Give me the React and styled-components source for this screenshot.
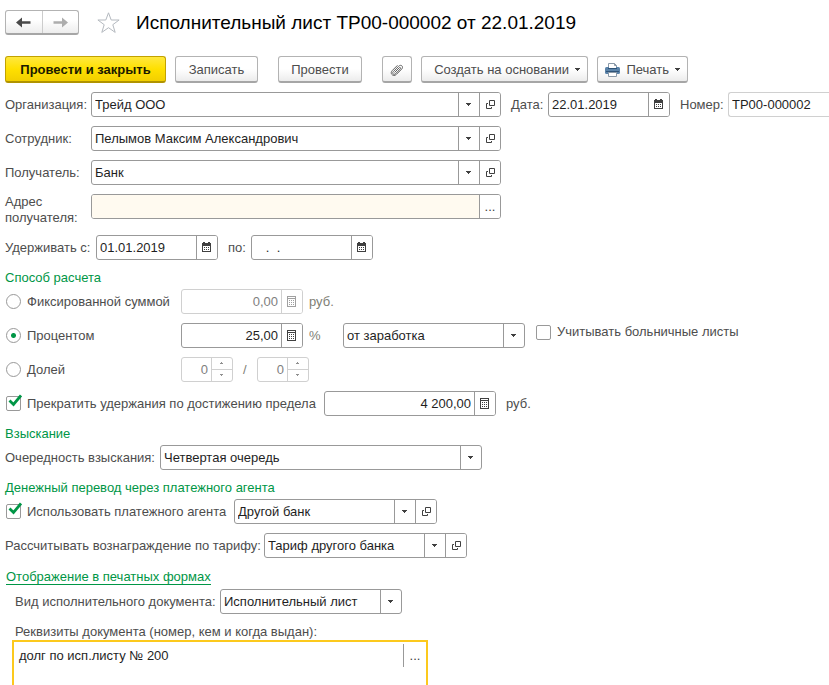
import React, { useId } from 'react'
import styled, { createGlobalStyle } from 'styled-components'

const GlobalStyle = createGlobalStyle`
  * {
    box-sizing: border-box;
  }
  body {
    margin: 0;
    background: #fff;
  }
  body, button, input, select, textarea {
    font-family: "Liberation Sans", Arial, sans-serif;
    font-size: 13px;
    line-height: 16px;
    color: #4d4d4d;
  }
`

const Page = styled.main`
  height: 100vh;
  padding: 10px 0 0 5px;
  overflow: hidden;
`

const Header = styled.header`
  display: flex;
  align-items: center;
  height: 25px;
`

const NavGroup = styled.div`
  display: flex;
  width: 74px;
  height: 25px;
  border: 1px solid #b3b3b3;
  border-bottom: 2px solid #a6a6a6;
  border-radius: 3px;
  background: linear-gradient(#fff 40%, #ededed);
`

const NavButton = styled.button`
  flex: 1;
  display: flex;
  align-items: center;
  justify-content: center;
  padding: 0;
  border: 0;
  background: none;
  color: #4a4a4a;

  & + & {
    border-left: 1px solid #ccc;
    color: #adadad;
  }
`

const StarButton = styled.button`
  display: flex;
  margin: 0 15px 0 17px;
  padding: 0;
  border: 0;
  background: none;
`

const Title = styled.h1`
  margin: 0;
  padding-top: 1px;
  font-size: 19px;
  line-height: 24px;
  font-weight: normal;
  color: #000;
  white-space: nowrap;
`

const Toolbar = styled.div`
  display: flex;
  gap: 20px;
  margin: 21px 0 9px;
`

const ToolGroup = styled.div`
  display: flex;
  gap: 9px;
`

const ToolButton = styled.button`
  display: flex;
  align-items: center;
  justify-content: ${({ $menu }) => ($menu ? 'flex-end' : 'center')};
  gap: 6px;
  width: ${({ $width }) => $width}px;
  height: 27px;
  padding: 1px ${({ $menu }) => ($menu ? 6 : 0)}px 0 0;
  white-space: nowrap;
  border: 1px solid ${({ $primary }) => ($primary ? '#c2a200' : '#b3b3b3')};
  border-bottom: 2px solid ${({ $primary }) => ($primary ? '#b09300' : '#a6a6a6')};
  border-radius: 3px;
  background: ${({ $primary }) =>
    $primary ? 'linear-gradient(#ffe83f, #ffe000 50%, #f2cf00)' : 'linear-gradient(#fff 50%, #ececec)'};
  color: ${({ $primary }) => ($primary ? '#1a1a00' : '#4d4d4d')};
  font-weight: ${({ $primary }) => ($primary ? 'bold' : 'normal')};
`

const Form = styled.form`
  display: flex;
  flex-direction: column;
  gap: 9px;
`

const Row = styled.div`
  display: flex;
  align-items: ${({ $top }) => ($top ? 'flex-start' : 'center')};
  min-height: 25px;
  padding-left: ${({ $indent }) => ($indent ? 10 : 0)}px;
`

const Label = styled.label`
  flex: none;
  width: ${({ $width }) => ($width ? `${$width}px` : 'auto')};
  white-space: ${({ $wrap }) => ($wrap ? 'normal' : 'nowrap')};
`

const Section = styled.section`
  display: flex;
  flex-direction: column;
  gap: 9px;
`

const SectionTitle = styled.h2`
  margin: 0 0 -6px;
  padding-top: 1px;
  font-size: 13px;
  line-height: 16px;
  font-weight: normal;
  color: #009646;
`

const SectionLink = styled.a`
  display: inline-block;
  margin: 1px;
  border-bottom: 1px solid #009646;
  color: #009646;
  line-height: 15px;
  text-decoration: none;
`

const Box = styled.div`
  display: flex;
  flex: 0 1 ${({ $width }) => $width}px;
  min-width: 0;
  height: 25px;
  border: 1px solid ${({ $muted }) => ($muted ? '#d0d0d0' : '#999')};
  border-radius: 3px;
  background: #fff;
  overflow: hidden;
`

const NumberBox = styled(Box)`
  flex: 1 0 90px;
  border-right: 0;
  border-radius: 3px 0 0 3px;
`

const TextInput = styled.input`
  flex: 1;
  min-width: 0;
  padding: 0 3px;
  border: 0;
  outline: 0;
  background: ${({ $tinted }) => ($tinted ? '#fffaf0' : 'transparent')};
  color: #1f1f1f;
  text-align: ${({ $right }) => ($right ? 'right' : 'left')};

  &:disabled {
    color: #808080;
  }
`

const SelectWrap = styled.div`
  flex: 1;
  min-width: 0;
  display: grid;
  grid-template-columns: 1fr 21px;
`

const NativeSelect = styled.select`
  grid-area: 1 / 1 / 2 / 3;
  min-width: 0;
  padding: 0 24px 0 3px;
  border: 0;
  outline: 0;
  appearance: none;
  background: transparent;
  color: #1f1f1f;
`

const SelectArrow = styled.span`
  grid-area: 1 / 2;
  display: flex;
  align-items: center;
  justify-content: center;
  border-left: 1px solid #999;
  pointer-events: none;
`

const BoxButton = styled.button`
  flex: 0 0 21px;
  display: flex;
  align-items: center;
  justify-content: center;
  padding: 0;
  border: 0;
  border-left: 1px solid #999;
  background: #fff;
  color: #404040;

  &:disabled {
    border-color: #d0d0d0;
    color: #a0a0a0;
  }
`

const Spin = styled.div`
  flex: 0 0 21px;
  display: flex;
  flex-direction: column;
  border-left: 1px solid #d0d0d0;
`

const SpinButton = styled.button`
  flex: 1;
  display: flex;
  align-items: center;
  justify-content: center;
  padding: 0;
  border: 0;
  background: none;
  color: #909090;

  & + & {
    border-top: 1px solid #d0d0d0;
  }
`

const Unit = styled.span`
  flex: none;
  width: ${({ $width }) => ($width ? `${$width}px` : 'auto')};
  padding-left: ${({ $wide }) => ($wide ? 10 : 6)}px;
  color: ${({ $muted }) => ($muted ? '#808075' : '#4d4d4d')};
`

const Choice = styled.label`
  flex: none;
  align-self: ${({ $top }) => ($top ? 'flex-start' : 'auto')};
  display: flex;
  align-items: center;
  gap: 6px;
  width: ${({ $width }) => ($width ? `${$width}px` : 'auto')};
  margin-left: ${({ $gap }) => $gap || 0}px;
  padding: ${({ $top }) => ($top ? 1 : 0)}px 0 0 1px;
  white-space: nowrap;
`

const Radio = styled.input`
  width: 15px;
  height: 15px;
  margin: 0;
  appearance: none;
  border: 1px solid #999;
  border-radius: 50%;

  &:checked {
    background: radial-gradient(circle, #009646 2px, #fff 3px);
  }
`

const CheckWrap = styled.span`
  position: relative;
  display: flex;

  svg {
    position: absolute;
    left: 1px;
    top: -2px;
    pointer-events: none;
  }
  input:not(:checked) + svg {
    display: none;
  }
`

const CheckInput = styled.input`
  width: 15px;
  height: 15px;
  margin: 0;
  appearance: none;
  border: 1px solid #999;
  border-radius: 2px;
`

const MemoLabel = styled(Label)`
  padding: 1px 0 0 10px;
`

const MemoBox = styled.div`
  display: flex;
  align-items: flex-start;
  width: 100%;
  max-width: 416px;
  height: 80px;
  margin: -9px 0 0 7px;
  border: 2px solid #fcc91d;
`

const MemoText = styled.textarea`
  flex: 1;
  height: 100%;
  padding: 6px 5px;
  border: 0;
  outline: 0;
  resize: none;
  background: transparent;
  color: #1f1f1f;
`

const MemoButton = styled(BoxButton)`
  flex-basis: 23px;
  height: 23px;
  margin-top: 2px;
`

const NavIcon = ({ back }) => (
  <svg width="15" height="11" viewBox="0 0 15 11" fill="currentColor">
    {back ? <path d="M0 5.5 6 .5v3.7h8.5v2.6H6v3.7z" /> : <path d="M15 5.5 9 .5v3.7H.5v2.6H9v3.7z" />}
  </svg>
)

const StarIcon = () => (
  <svg width="25" height="24" viewBox="0 0 25 24" fill="#fff" stroke="#b4b9bf">
    <path d="M12.5 1.8 15.2 9h7.9l-6.3 4.7 2.4 7.7-6.7-4.7-6.7 4.7 2.4-7.7L1.9 9h7.9z" />
  </svg>
)

const Caret = () => (
  <svg width="6" height="3" viewBox="0 0 6 3" fill="#404040" shapeRendering="crispEdges">
    <path d="M0 0h5v1H4v1H3v1H2V2H1V1H0z" />
  </svg>
)

const OpenIcon = () => (
  <svg width="10" height="9" viewBox="-1 0 10 9" fill="none" stroke="currentColor">
    <path d="M3.5.5h5v5h-5zM2 3.5H.5v5h5V7" />
  </svg>
)

const CalendarIcon = () => (
  <svg width="10" height="11" viewBox="0 0 10 11" fill="currentColor" shapeRendering="crispEdges">
    <path d="M0 1h1V0h2v1h3V0h2v1h1v9H0zM1 4v5h7V4z" fillRule="evenodd" />
    <path d="M2 5h1v1H2zM4 5h1v1H4zM6 5h1v1H6zM2 7h1v1H2zM4 7h1v1H4zM6 7h1v1H6z" />
  </svg>
)

const CalcIcon = () => (
  <svg width="10" height="11" viewBox="0 0 10 11" fill="currentColor" shapeRendering="crispEdges">
    <path d="M0 0h9v11H0zM1 1v1h7V1zM1 3v7h7V3z" fillRule="evenodd" />
    <path d="M2 4h1v1H2zM4 4h1v1H4zM6 4h1v1H6zM2 6h1v1H2zM4 6h1v1H4zM6 6h1v1H6zM2 8h1v1H2zM4 8h1v1H4zM6 8h1v1H6z" />
  </svg>
)

const ClipIcon = () => (
  <svg width="14" height="14" viewBox="0 0 14 14" fill="none" stroke="#606060">
    <path d="M4.500 9.500 9.200 4.800c.9-.9 2 .2 1.100 1.100L5.500 10.700c-1.700 1.700-3.900-.4-2.200-2.100L8.600 3.300c2.500-2.500 5.400.4 3 2.900L6.400 11.400c-3 3-7.100-.9-4.100-3.900L7.500 2.300" />
  </svg>
)

const PrinterIcon = () => (
  <svg width="15" height="14" viewBox="0 0 15 14">
    <path d="M3.500 5.500v-5h6l2 2v3" fill="#fff" stroke="#8a99a8" />
    <path d="M9.500.5v2h2" fill="none" stroke="#8a99a8" />
    <rect y="4" width="15" height="7" rx="1.500" fill="#5a82a8" />
    <path d="M4 3h7v2H4z" fill="#fff" />
    <path d="M3 5.500h9" stroke="#2f5478" />
    <path d="M1 8.500h13" stroke="#2f5478" />
    <path d="M3.500 9.500h8v4h-8z" fill="#fff" stroke="#8a99a8" />
  </svg>
)

const TickIcon = () => (
  <svg width="15" height="14" viewBox="0 0 15 14" fill="none" stroke="#009646" strokeWidth="2.800">
    <path d="M2.500 6.500l4 4L14 1.500" />
  </svg>
)

const SpinIcon = ({ down }) => (
  <svg width="4" height="3" viewBox="0 0 4 3" fill="currentColor" shapeRendering="crispEdges">
    <path d={down ? 'M0 0h3v1H2v1H1V1H0z' : 'M1 0h1v1h1v1H0V1h1z'} />
  </svg>
)

const Select = ({ id, value, label }) => (
  <SelectWrap>
    <NativeSelect id={id} aria-label={label} defaultValue={value}>
      <option>{value}</option>
    </NativeSelect>
    <SelectArrow>
      <Caret />
    </SelectArrow>
  </SelectWrap>
)

const SelectField = ({ label, labelWidth, value, width, open }) => {
  const id = useId()
  return (
    <>
      {labelWidth && <Label htmlFor={id} $width={labelWidth}>{label}</Label>}
      <Box $width={width}>
        <Select id={id} value={value} label={labelWidth ? undefined : label} />
        {open && <BoxButton type="button" aria-label="Открыть"><OpenIcon /></BoxButton>}
      </Box>
    </>
  )
}

const DateField = ({ label, labelWidth, value }) => {
  const id = useId()
  return (
    <>
      <Label htmlFor={id} $width={labelWidth}>{label}</Label>
      <Box $width={122}>
        <TextInput id={id} defaultValue={value} />
        <BoxButton type="button" aria-label="Выбрать дату"><CalendarIcon /></BoxButton>
      </Box>
    </>
  )
}

const AmountField = ({ label, value, width, disabled }) => (
  <Box $width={width} $muted={disabled}>
    <TextInput aria-label={label} defaultValue={value} disabled={disabled} $right />
    <BoxButton type="button" aria-label="Калькулятор" disabled={disabled}><CalcIcon /></BoxButton>
  </Box>
)

const SpinField = ({ label }) => (
  <Box $width={52} $muted>
    <TextInput aria-label={label} defaultValue="0" disabled $right />
    <Spin>
      <SpinButton type="button" aria-label="Больше" disabled><SpinIcon /></SpinButton>
      <SpinButton type="button" aria-label="Меньше" disabled><SpinIcon down /></SpinButton>
    </Spin>
  </Box>
)

const RadioField = ({ label, checked }) => (
  <Choice $width={176}>
    <Radio type="radio" name="method" defaultChecked={checked} />
    {label}
  </Choice>
)

const CheckField = ({ label, checked, width, gap, top }) => (
  <Choice $width={width} $gap={gap} $top={top}>
    <CheckWrap>
      <CheckInput type="checkbox" defaultChecked={checked} />
      <TickIcon />
    </CheckWrap>
    {label}
  </Choice>
)

const App = () => (
  <Page>
    <GlobalStyle />
    <Header>
      <NavGroup>
        <NavButton aria-label="Назад"><NavIcon back /></NavButton>
        <NavButton aria-label="Вперед"><NavIcon /></NavButton>
      </NavGroup>
      <StarButton aria-label="В избранное"><StarIcon /></StarButton>
      <Title>Исполнительный лист ТР00-000002 от 22.01.2019</Title>
    </Header>

    <Toolbar>
      <ToolGroup>
        <ToolButton $primary $width={161}>Провести и закрыть</ToolButton>
        <ToolButton $width={83}>Записать</ToolButton>
      </ToolGroup>
      <ToolButton $width={84}>Провести</ToolButton>
      <ToolGroup>
        <ToolButton $width={30} aria-label="Файлы"><ClipIcon /></ToolButton>
        <ToolButton $menu $width={167}>Создать на основании <Caret /></ToolButton>
        <ToolButton $menu $width={91}><PrinterIcon /> Печать <Caret /></ToolButton>
      </ToolGroup>
    </Toolbar>

    <Form>
      <Row>
        <SelectField label="Организация:" labelWidth={86} value="Трейд ООО" width={410} open />
        <Unit $wide />
        <DateField label="Дата:" labelWidth={37} value="22.01.2019" />
        <Unit $wide />
        <Label htmlFor="number" $width={48}>Номер:</Label>
        <NumberBox $muted>
          <TextInput id="number" defaultValue="ТР00-000002" />
        </NumberBox>
      </Row>
      <Row>
        <SelectField label="Сотрудник:" labelWidth={86} value="Пелымов Максим Александрович" width={410} open />
      </Row>
      <Row>
        <SelectField label="Получатель:" labelWidth={86} value="Банк" width={410} open />
      </Row>
      <Row $top>
        <Label htmlFor="address" $width={86} $wrap>Адрес получателя:</Label>
        <Box $width={410}>
          <TextInput id="address" $tinted />
          <BoxButton type="button" aria-label="Выбрать адрес">...</BoxButton>
        </Box>
      </Row>
      <Row>
        <DateField label="Удерживать с:" labelWidth={91} value="01.01.2019" />
        <Unit $wide />
        <DateField label="по:" labelWidth={23} value="   .  ." />
      </Row>

      <Section>
        <SectionTitle>Способ расчета</SectionTitle>
        <Row>
          <RadioField label="Фиксированной суммой" />
          <AmountField label="Сумма" value="0,00" width={122} disabled />
          <Unit $muted>руб.</Unit>
        </Row>
        <Row>
          <RadioField label="Процентом" checked />
          <AmountField label="Процент" value="25,00" width={122} />
          <Unit $muted $width={40}>%</Unit>
          <SelectField label="База расчета" value="от заработка" width={182} />
          <CheckField label="Учитывать больничные листы" gap={10} top />
        </Row>
        <Row>
          <RadioField label="Долей" />
          <SpinField label="Числитель" />
          <Unit $wide $muted $width={24}>/</Unit>
          <SpinField label="Знаменатель" />
        </Row>
        <Row>
          <CheckField label="Прекратить удержания по достижению предела" checked width={319} />
          <AmountField label="Предел" value="4 200,00" width={172} />
          <Unit $wide>руб.</Unit>
        </Row>
      </Section>

      <Section>
        <SectionTitle>Взыскание</SectionTitle>
        <Row>
          <SelectField label="Очередность взыскания:" labelWidth={155} value="Четвертая очередь" width={322} />
        </Row>
      </Section>

      <Section>
        <SectionTitle>Денежный перевод через платежного агента</SectionTitle>
        <Row>
          <CheckField label="Использовать платежного агента" checked width={229} />
          <SelectField label="Платежный агент" value="Другой банк" width={203} open />
        </Row>
        <Row>
          <SelectField label="Рассчитывать вознаграждение по тарифу:" labelWidth={259} value="Тариф другого банка" width={203} open />
        </Row>
      </Section>

      <Section>
        <SectionTitle>
          <SectionLink href="#print">Отображение в печатных формах</SectionLink>
        </SectionTitle>
        <Row $indent>
          <SelectField label="Вид исполнительного документа:" labelWidth={205} value="Исполнительный лист" width={182} />
        </Row>
        <MemoLabel htmlFor="memo">Реквизиты документа (номер, кем и когда выдан):</MemoLabel>
        <MemoBox>
          <MemoText id="memo" defaultValue="долг по исп.листу № 200" />
          <MemoButton type="button" aria-label="Выбрать">...</MemoButton>
        </MemoBox>
      </Section>
    </Form>
  </Page>
)

export default App
